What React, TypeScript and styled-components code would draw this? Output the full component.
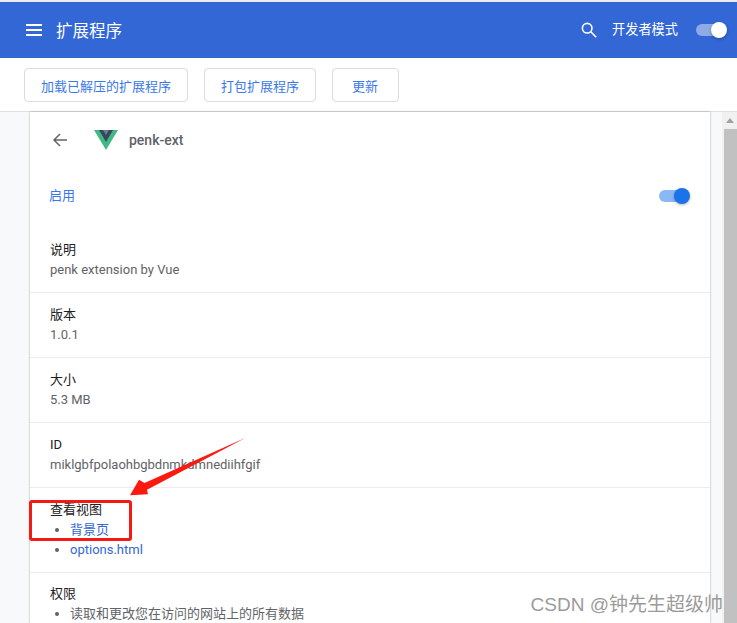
import styled, { createGlobalStyle } from "styled-components";

const GlobalStyle = createGlobalStyle`
  html, body {
    margin: 0;
    padding: 0;
    overflow: hidden;
  }
  body {
    font-family: Roboto, "Noto Sans CJK SC", sans-serif;
  }
`;

const rows = [
  { label: "说明", value: "penk extension by Vue" },
  { label: "版本", value: "1.0.1" },
  { label: "大小", value: "5.3 MB" },
  { label: "ID", value: "miklgbfpolaohbgbdnmkdmnediihfgif" },
];

const App = () => {
  return (
    <Page>
      <GlobalStyle />
      <Header>
        <MenuIcon viewBox="0 0 16 12">
          <path d="M0 1h16M0 6h16M0 11h16" stroke="#fff" strokeWidth="1.8" />
        </MenuIcon>
        <Title>扩展程序</Title>
        <HeaderRight>
          <SearchIcon viewBox="0 0 16 16">
            <circle cx="6.2" cy="6.2" r="4.8" fill="none" stroke="#fff" strokeWidth="1.6" />
            <path d="M9.8 9.8l5.4 5.4" stroke="#fff" strokeWidth="1.6" />
          </SearchIcon>
          <DevMode>开发者模式</DevMode>
          <Switch $track="#8fabe6" $knob="#fff" />
        </HeaderRight>
      </Header>
      <Toolbar>
        <ToolButton>加载已解压的扩展程序</ToolButton>
        <ToolButton>打包扩展程序</ToolButton>
        <ToolButton $wide>更新</ToolButton>
      </Toolbar>
      <Body>
        <Card>
          <CardHeader>
            <BackIcon viewBox="0 0 14 14">
              <path d="M14 7H1.5M7 1L1 7l6 6" fill="none" stroke="#5f6368" strokeWidth="1.5" />
            </BackIcon>
            <VueLogo viewBox="0 0 24 20">
              <path d="M0 0h24L12 20z" fill="#42b883" />
              <path d="M5 0h14l-7 12z" fill="#35495e" />
              <path d="M9 0h6l-3 5z" fill="#6f7d8f" />
            </VueLogo>
            <ExtName>penk-ext</ExtName>
          </CardHeader>
          <EnableRow>
            <EnableLabel>启用</EnableLabel>
            <Switch $track="#8ab8f5" $knob="#1a73e8" />
          </EnableRow>
          {rows.map((row) => (
            <InfoRow key={row.label}>
              <Label>{row.label}</Label>
              <Value>{row.value}</Value>
            </InfoRow>
          ))}
          <InfoRow>
            <Label>查看视图</Label>
            <List>
              <li>
                <LinkText>背景页</LinkText>
              </li>
              <li>
                <LinkText>options.html</LinkText>
              </li>
            </List>
          </InfoRow>
          <InfoRow>
            <Label>权限</Label>
            <List>
              <li>读取和更改您在访问的网站上的所有数据</li>
            </List>
          </InfoRow>
        </Card>
        <Scrollbar>
          <ScrollArrow />
          <ScrollThumb />
        </Scrollbar>
      </Body>
      <RedBox />
      <Arrow viewBox="0 0 125 70">
        <path d="M120.7 5.7L19.5 51l-5.5-3.3L5 63.3l18-1-1-4.6z" fill="#fb1a10" />
      </Arrow>
      <Watermark>CSDN @钟先生超级帅</Watermark>
    </Page>
  );
};

export default App;

const Page = styled.div`
  position: relative;
  display: flex;
  flex-direction: column;
  width: 737px;
  height: 623px;
  padding-top: 2px;
  box-sizing: border-box;
  overflow: hidden;
  background: #e9ebee;
`;

const Header = styled.div`
  display: flex;
  align-items: center;
  flex-shrink: 0;
  height: 56px;
  padding: 0 13px 0 26px;
  background: #3367d6;
  color: #fff;
`;

const MenuIcon = styled.svg`
  width: 16px;
  height: 12px;
`;

const Title = styled.div`
  margin-left: 14px;
  font-size: 16.5px;
`;

const HeaderRight = styled.div`
  display: flex;
  align-items: center;
  margin-left: auto;
`;

const SearchIcon = styled.svg`
  width: 16px;
  height: 16px;
  margin-right: 15px;
`;

const DevMode = styled.div`
  margin-right: 18px;
  padding-bottom: 3px;
  font-size: 13.2px;
`;

const Switch = styled.div<{ $track: string; $knob: string }>`
  position: relative;
  width: 28px;
  height: 12px;
  border-radius: 6px;
  background: ${(p) => p.$track};

  &::after {
    content: "";
    position: absolute;
    top: -2px;
    right: -3px;
    width: 16px;
    height: 16px;
    border-radius: 50%;
    background: ${(p) => p.$knob};
    box-shadow: 0 1px 3px rgba(0, 0, 0, 0.3);
  }
`;

const Toolbar = styled.div`
  display: flex;
  align-items: flex-start;
  flex-shrink: 0;
  gap: 16px;
  height: 54px;
  padding: 10px 0 0 24px;
  box-sizing: border-box;
  border-bottom: 1px solid #e0e0e0;
  background: #fff;
`;

const ToolButton = styled.div<{ $wide?: boolean }>`
  display: flex;
  align-items: center;
  height: 32px;
  padding: ${(p) => (p.$wide ? "0 20px 0 19px" : "0 16px")};
  border: 1px solid #dadce0;
  border-radius: 4px;
  color: #3b78e7;
  font-size: 13px;
  background: #fff;
`;

const Body = styled.div`
  display: flex;
  flex: 1;
  min-height: 0;
  background: #f8f9fa;
`;

const Card = styled.div`
  width: 680px;
  margin-left: 30px;
  background: #fff;
  box-shadow: 0 0 2px rgba(60, 64, 67, 0.45);
`;

const CardHeader = styled.div`
  display: flex;
  align-items: center;
  height: 56px;
  padding-left: 23px;
`;

const BackIcon = styled.svg`
  width: 14px;
  height: 14px;
`;

const VueLogo = styled.svg`
  width: 24px;
  height: 20px;
  margin-left: 27px;
`;

const ExtName = styled.div`
  margin-left: 11px;
  color: #5f6368;
  font-size: 14px;
  font-weight: 500;
`;

const EnableRow = styled.div`
  display: flex;
  align-items: center;
  justify-content: space-between;
  height: 56px;
  margin-bottom: 4px;
  padding: 0 23px 0 19px;
`;

const EnableLabel = styled.div`
  padding-bottom: 4px;
  color: #3b78e7;
  font-size: 13px;
`;

const InfoRow = styled.div`
  padding: 12px 20px;
  border-bottom: 1px solid #ececec;
  font-size: 13px;
  line-height: 20px;

  &:last-child {
    padding-top: 11px;
    border-bottom: 0;
  }
`;

const Label = styled.div`
  color: #202124;
`;

const Value = styled.div`
  color: #5f6368;
`;

const List = styled.ul`
  margin: 0;
  padding: 0 0 0 20px;
  color: #5f6368;
`;

const LinkText = styled.span`
  color: #3367d6;
`;

const Scrollbar = styled.div`
  display: flex;
  flex-direction: column;
  align-items: center;
  width: 15px;
  margin-left: 12px;
  background: #f1f1f1;
`;

const ScrollArrow = styled.div`
  flex-shrink: 0;
  width: 0;
  height: 0;
  margin: 6px 0 6px;
  border-left: 4px solid transparent;
  border-right: 4px solid transparent;
  border-bottom: 5px solid #a3a3a3;
`;

const ScrollThumb = styled.div`
  flex: 1;
  align-self: flex-end;
  width: 13px;
  background: #c1c1c1;
`;

const RedBox = styled.div`
  position: absolute;
  left: 29px;
  top: 500px;
  width: 97px;
  height: 35px;
  border: 3px solid #f21a12;
  border-radius: 3px;
`;

const Arrow = styled.svg`
  position: absolute;
  left: 125px;
  top: 432px;
  width: 125px;
  height: 70px;
`;

const Watermark = styled.div`
  position: absolute;
  right: 14px;
  top: 589px;
  color: #9b9b9b;
  font-family: "Liberation Sans", "Noto Sans CJK SC", sans-serif;
  font-size: 19px;
  white-space: nowrap;
`;
